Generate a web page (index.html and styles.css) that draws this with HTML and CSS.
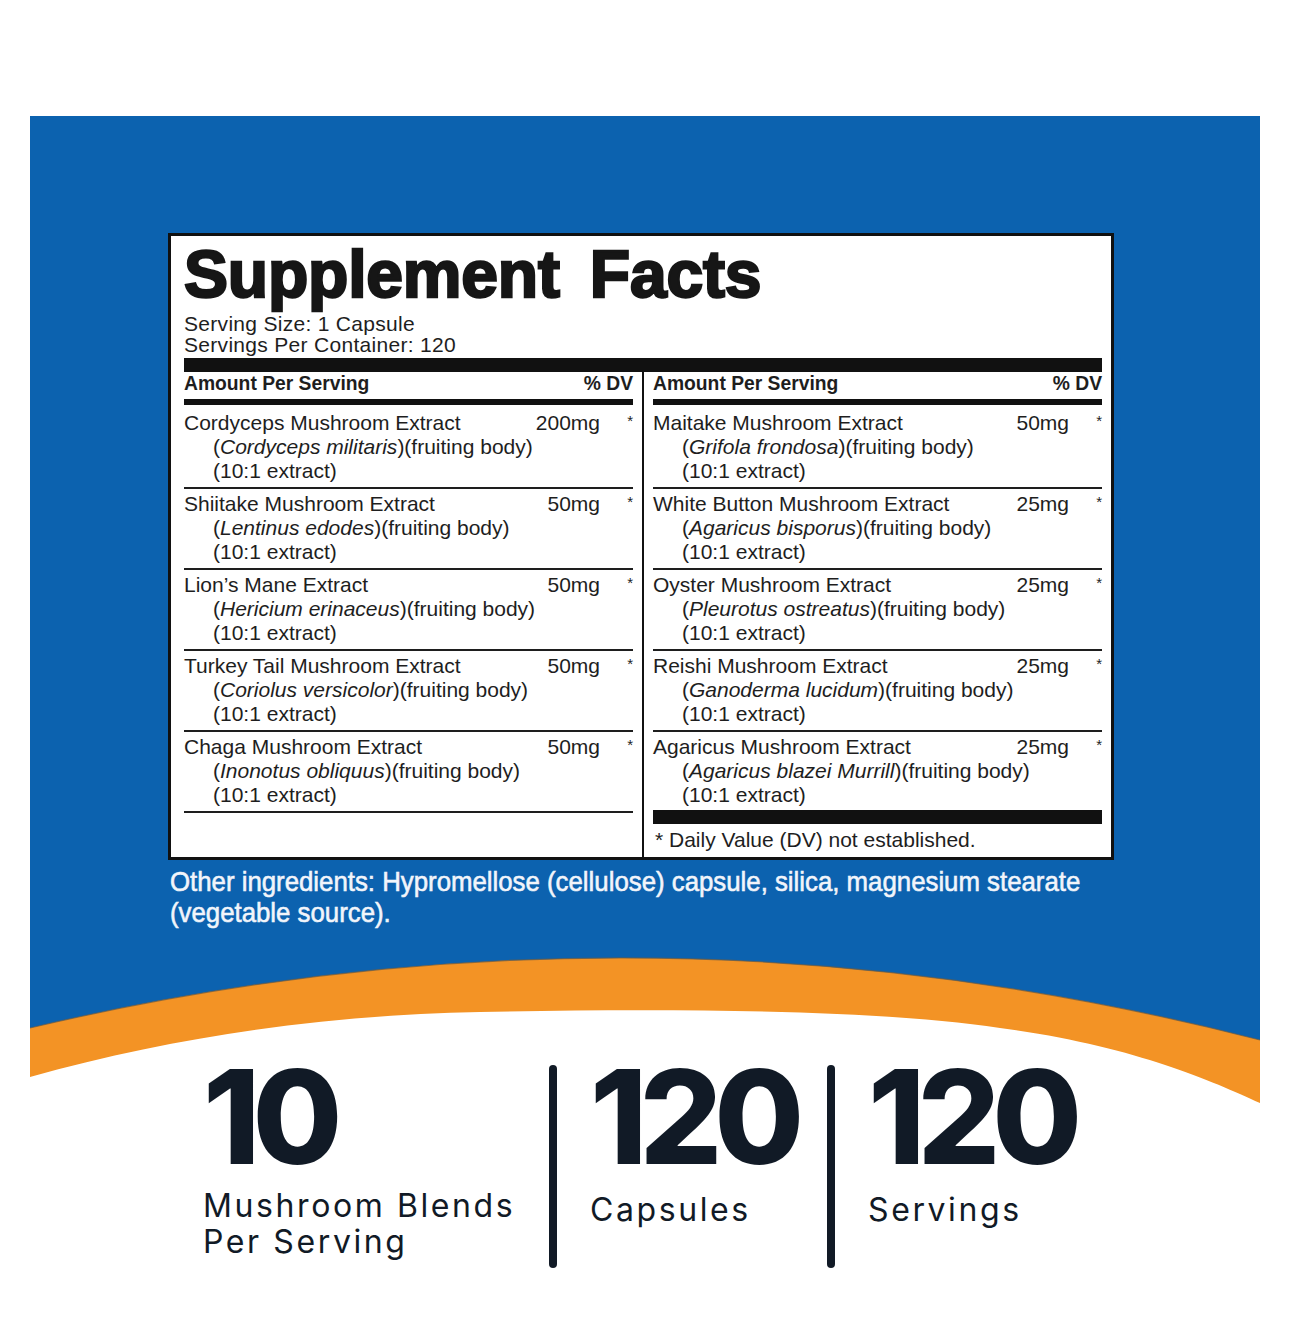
FILE: index.html
```html
<!DOCTYPE html>
<html lang="en">
<head>
<meta charset="utf-8">
<title>Mushroom Complex – Supplement Facts</title>
<link rel="stylesheet" href="styles.css">
</head>
<body>
<div class="card">
  <section class="blue">
    <div class="facts">
      <h1 class="title">Supplement Facts</h1>
      <div class="serving">
        <div>Serving Size: 1 Capsule</div>
        <div>Servings Per Container: 120</div>
      </div>
      <div class="bar bar-top"></div>
      <div class="cols">
        <div class="col">
          <div class="head"><span>Amount Per Serving</span><span>% DV</span></div>
          <div class="bar bar-mid"></div>
          <div class="row">
            <span class="name">Cordyceps Mushroom Extract</span><span class="amt">200mg</span><span class="star">*</span>
            <span class="sub">(<i>Cordyceps militaris</i>)(fruiting body)</span>
            <span class="sub">(10:1 extract)</span>
          </div>
          <div class="row">
            <span class="name">Shiitake Mushroom Extract</span><span class="amt">50mg</span><span class="star">*</span>
            <span class="sub">(<i>Lentinus edodes</i>)(fruiting body)</span>
            <span class="sub">(10:1 extract)</span>
          </div>
          <div class="row">
            <span class="name">Lion’s Mane Extract</span><span class="amt">50mg</span><span class="star">*</span>
            <span class="sub">(<i>Hericium erinaceus</i>)(fruiting body)</span>
            <span class="sub">(10:1 extract)</span>
          </div>
          <div class="row">
            <span class="name">Turkey Tail Mushroom Extract</span><span class="amt">50mg</span><span class="star">*</span>
            <span class="sub">(<i>Coriolus versicolor</i>)(fruiting body)</span>
            <span class="sub">(10:1 extract)</span>
          </div>
          <div class="row">
            <span class="name">Chaga Mushroom Extract</span><span class="amt">50mg</span><span class="star">*</span>
            <span class="sub">(<i>Inonotus obliquus</i>)(fruiting body)</span>
            <span class="sub">(10:1 extract)</span>
          </div>
        </div>
        <div class="vr"></div>
        <div class="col">
          <div class="head"><span>Amount Per Serving</span><span>% DV</span></div>
          <div class="bar bar-mid"></div>
          <div class="row">
            <span class="name">Maitake Mushroom Extract</span><span class="amt">50mg</span><span class="star">*</span>
            <span class="sub">(<i>Grifola frondosa</i>)(fruiting body)</span>
            <span class="sub">(10:1 extract)</span>
          </div>
          <div class="row">
            <span class="name">White Button Mushroom Extract</span><span class="amt">25mg</span><span class="star">*</span>
            <span class="sub">(<i>Agaricus bisporus</i>)(fruiting body)</span>
            <span class="sub">(10:1 extract)</span>
          </div>
          <div class="row">
            <span class="name">Oyster Mushroom Extract</span><span class="amt">25mg</span><span class="star">*</span>
            <span class="sub">(<i>Pleurotus ostreatus</i>)(fruiting body)</span>
            <span class="sub">(10:1 extract)</span>
          </div>
          <div class="row">
            <span class="name">Reishi Mushroom Extract</span><span class="amt">25mg</span><span class="star">*</span>
            <span class="sub">(<i>Ganoderma lucidum</i>)(fruiting body)</span>
            <span class="sub">(10:1 extract)</span>
          </div>
          <div class="row row-last">
            <span class="name">Agaricus Mushroom Extract</span><span class="amt">25mg</span><span class="star">*</span>
            <span class="sub">(<i>Agaricus blazei Murrill</i>)(fruiting body)</span>
            <span class="sub">(10:1 extract)</span>
          </div>
          <div class="bar bar-foot"></div>
          <p class="note">* Daily Value (DV) not established.</p>
        </div>
      </div>
    </div>
    <p class="other">Other ingredients: Hypromellose (cellulose) capsule, silica, magnesium stearate<br>(vegetable source).</p>
  </section>

  <svg class="wave" viewBox="0 0 1230 180" width="1230" height="180" preserveAspectRatio="none" aria-hidden="true">
    <path d="M0,88 Q615,-58 1230,100 L1230,180 L0,180 Z" fill="#f39325"/>
    <path d="M0,88 Q615,-58 1230,100" fill="none" stroke="#6b5b45" stroke-width="1.2" opacity="0.7"/>
    <path d="M0,137 C150,95 300,75 450,72 C650,68 850,70 970,88 C1100,105 1180,140 1230,163 L1230,180 L0,180 Z" fill="#ffffff"/>
  </svg>

  <section class="stats">
    <div class="stat stat-first">
      <div class="num">10</div>
      <div class="label">Mushroom Blends<br>Per Serving</div>
    </div>
    <div class="divider"></div>
    <div class="stat stat-mid">
      <div class="num">120</div>
      <div class="label label-low">Capsules</div>
    </div>
    <div class="divider"></div>
    <div class="stat">
      <div class="num">120</div>
      <div class="label label-low">Servings</div>
    </div>
  </section>
</div>
</body>
</html>
```

FILE: styles.css
```css
* { box-sizing: border-box; }

body {
  margin: 0;
  background: #ffffff;
}

.card {
  position: relative;
  width: 1230px;
  margin: 116px 0 0 30px;
}

.wave {
  position: absolute;
  z-index: 1;
  left: 0;
  top: 824px;
  width: 1230px;
  height: 180px;
  display: block;
}

.blue {
  background: #0c62af;
  height: 929px;
  padding: 117px 0 0 138px;
}

/* ---------- facts panel ---------- */
.facts {
  width: 946px;
  border: 3px solid #111;
  background: #fff;
  padding: 5px 9px 0 13px;
  font-family: "Liberation Sans", Arial, sans-serif;
  color: #1e1e1e;
}

.title {
  margin: 0;
  font-size: 66px;
  line-height: 66px;
  font-weight: 700;
  word-spacing: 12px;
  letter-spacing: -0.2px;
  color: #161616;
  -webkit-text-stroke: 2.4px #161616;
}

.serving {
  margin-top: 6px;
  font-size: 21px;
  line-height: 21px;
  letter-spacing: 0.3px;
}

.bar { background: #111; }
.bar-top { height: 14px; margin-top: 3px; }
.bar-mid { height: 6px; margin: 4px 0 3px; }
.bar-foot { height: 14px; margin-top: -1px; }

.cols {
  display: grid;
  grid-template-columns: 449px 2px 449px;
  column-gap: 9px;
}

.vr { background: #111; }

.head {
  display: flex;
  justify-content: space-between;
  padding-top: 1px;
  font-weight: 700;
  font-size: 19.3px;
  line-height: 22px;
}

.row {
  display: grid;
  grid-template-columns: 1fr auto 33px;
  padding: 3px 0 4px;
  border-bottom: 2px solid #1e1e1e;
  font-size: 21px;
  line-height: 24px;
}

.row-last { border-bottom: none; }

.amt { text-align: right; }

.star {
  text-align: right;
  font-size: 15px;
  line-height: 20px;
}

.sub {
  grid-column: 1 / -1;
  padding-left: 29px;
  white-space: nowrap;
}

.note {
  margin: 4px 0 0;
  padding: 0 0 5px 2px;
  font-size: 21px;
  line-height: 24px;
}

.other {
  margin: 6px 0 0 2px;
  font-family: "Liberation Sans Narrow", "Liberation Sans", Arial, sans-serif;
  font-size: 28.5px;
  line-height: 31px;
  color: #f2f5fb;
  white-space: nowrap;
  -webkit-text-stroke: 0.6px #f2f5fb;
  transform: scaleX(0.905);
  transform-origin: left top;
}

/* ---------- stats ---------- */
.stats {
  position: relative;
  z-index: 2;
  display: flex;
  padding-left: 173px;
  color: #111a26;
  font-family: Inter, "Noto Sans", sans-serif;
}

.stat { padding-top: 7px; }
.stat-first { width: 346px; }
.stat-mid { width: 270px; padding-left: 33px; }
.stat:last-child { padding-left: 33px; }

.num {
  font-size: 130px;
  line-height: 130px;
  font-weight: 800;
  letter-spacing: -8px;
}

.label {
  margin-top: 6px;
  font-size: 32px;
  line-height: 36px;
  font-weight: 400;
  letter-spacing: 2.6px;
}

.label-low { margin-top: 10px; }

.divider {
  width: 8px;
  height: 203px;
  margin-top: 20px;
  border-radius: 4px;
  background: #111a26;
}
```
